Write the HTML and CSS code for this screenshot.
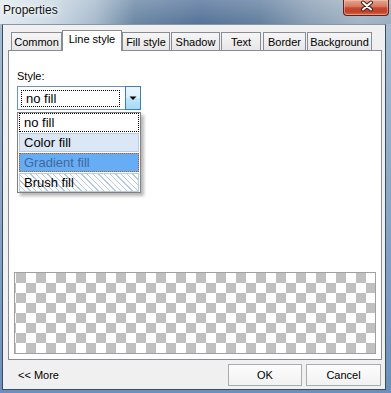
FILE: index.html
```html
<!DOCTYPE html>
<html lang="en">
<head>
    <meta charset="UTF-8">
    <title>Properties</title>
    <link rel="stylesheet" href="styles.css">
</head>
<body>
    <div class="window">
        <div class="titlebar">
            <span class="title">Properties</span>
            <div class="close">
                <svg width="46" height="15" viewBox="0 0 46 15">
                    <path d="M19 2.5 L27 9.5 M27 2.5 L19 9.5" stroke="#4a1d14" stroke-width="4" stroke-linecap="round"/>
                    <path d="M19 2.5 L27 9.5 M27 2.5 L19 9.5" stroke="#fff" stroke-width="2" stroke-linecap="round"/>
                </svg>
            </div>
        </div>

        <div class="client">
            <div class="tabs">
                <div class="tab tab-common">Common</div>
                <div class="tab tab-line active">Line style</div>
                <div class="tab tab-fill">Fill style</div>
                <div class="tab tab-shadow">Shadow</div>
                <div class="tab tab-text">Text</div>
                <div class="tab tab-border">Border</div>
                <div class="tab tab-bg">Background</div>
            </div>

            <div class="panel">
                <div class="field">
                    <div class="label">Style:</div>
                    <div class="combo">
                        <div class="combo-value"><span class="focus">no fill</span></div>
                        <div class="combo-btn">
                            <svg width="14" height="22" viewBox="0 0 14 22">
                                <path d="M3.5 9.5 H10.5 L7 13 Z" fill="#000"/>
                            </svg>
                        </div>
                    </div>
                </div>

                <!-- open list of the combo -->
                <ul class="droplist">
                    <li class="opt opt-focus">no fill</li>
                    <li class="opt opt-color">Color fill</li>
                    <li class="opt opt-selected">Gradient fill</li>
                    <li class="opt opt-brush">Brush fill</li>
                </ul>

                <div class="preview"></div>
            </div>

            <div class="footer">
                <span class="more">&lt;&lt; More</span>
                <button class="btn btn-ok">OK</button>
                <button class="btn btn-cancel">Cancel</button>
            </div>
        </div>
    </div>
</body>
</html>
```

FILE: styles.css
```css
* {
    box-sizing: border-box;
}
body {
    margin: 0;
    font-family: "Liberation Sans", Arial, sans-serif;
    font-size: 11px;
    color: #000;
    background: #6b8fb7;
}
.window {
    width: 391px;
    height: 393px;
    padding: 0 5px 3px 2px;
    display: flex;
    flex-direction: column;
    background:
        linear-gradient(180deg, rgba(255,255,255,0.2), rgba(255,255,255,0) 24px) no-repeat 0 0 / 100% 24px,
        linear-gradient(90deg, #e2eaf0 0, #ccdae5 50px, #a7bbcc 95px, #6a87a4 135px, #55739a 200px, #63809f 260px, #8aa0b5 310px, #a3b5c5 360px, #9aaec0 391px) no-repeat 0 0 / 100% 24px,
        linear-gradient(180deg, #a9bfd2, #6c90b9);
}

/* title bar */
.titlebar {
    height: 24px;
    display: flex;
    align-items: flex-start;
    margin: 0 -5px 0 -2px;
}
.title {
    padding: 3px 0 0 3px;
    font-size: 12px;
    line-height: 14px;
    color: #141414;
    text-shadow: 0 0 5px #fff, 0 0 9px rgba(255,255,255,0.9);
}
.close {
    margin-left: auto;
    margin-right: 2px;
    width: 46px;
    height: 16px;
    border: 1px solid #5e2218;
    border-top: none;
    border-radius: 0 0 4px 4px;
    background: linear-gradient(180deg, #e4a593 0%, #d5765e 45%, #c34a30 52%, #c0412a 78%, #dd6a45 100%);
    box-shadow: inset 0 0 0 1px rgba(255,210,195,0.45);
}
.close svg {
    display: block;
}

/* client area */
.client {
    height: 366px;
    background: #f0f0f0;
    border: 1px solid #3b4d60;
    border-top-color: #8797a7;
    display: flex;
    flex-direction: column;
}

/* tabs */
.tabs {
    display: flex;
    align-items: flex-end;
    height: 20px;
    margin: 5px 0 0 8px;
}
.tab {
    height: 18px;
    padding-top: 1px;
    line-height: 16px;
    text-align: center;
    white-space: nowrap;
    border: 1px solid #898c95;
    border-bottom: none;
    background: linear-gradient(180deg, #f6f6f6, #e6e6e6);
}
.tab.active {
    position: relative;
    z-index: 1;
    height: 21px;
    margin-bottom: -1px;
    padding-top: 0;
    background: #fff;
}
.tab-common { width: 51px; }
.tab-line { width: 60px; }
.tab-fill { width: 48px; }
.tab-shadow { width: 49px; margin-left: 1px; }
.tab-text { width: 40px; margin-left: 1px; }
.tab-border { width: 43px; margin-left: 2px; }
.tab-bg { width: 65px; margin-left: 1px; }

/* tab page */
.panel {
    position: relative;
    height: 310px;
    margin: 0 3px 0 5px;
    background: #fff;
    border: 1px solid #898c95;
    display: flex;
    flex-direction: column;
}
.field {
    padding: 19px 8px 0;
}
.label {
    line-height: 13px;
}
.combo {
    display: flex;
    width: 124px;
    height: 24px;
    margin-top: 3px;
}
.combo-value {
    flex: 1;
    padding: 3px 5px 2px 3px;
    border: 1px solid #7093bb;
    border-right: none;
}
.focus {
    display: block;
    height: 17px;
    padding-left: 4px;
    font-size: 13px;
    line-height: 15px;
    border: 1px dotted #000;
}
.combo-btn {
    width: 16px;
    border: 1px solid #3c7fb1;
    background: linear-gradient(180deg, #eaf6fd 0%, #d9f0fc 50%, #bee6fd 50%, #a7d9f5 100%);
}
.combo-btn svg {
    display: block;
}

/* dropped list */
.droplist {
    position: absolute;
    left: 8px;
    top: 61px;
    width: 124px;
    margin: 0;
    padding: 0 1px;
    list-style: none;
    background: #fff;
    border: 1px solid #828282;
    box-shadow: 3px 3px 3px rgba(0,0,0,0.28);
}
.opt {
    height: 19px;
    margin-bottom: 1px;
    padding-left: 4px;
    font-size: 13px;
    line-height: 17px;
    border: 1px solid transparent;
}
.opt:last-child {
    margin-bottom: 0;
}
.opt-focus {
    border: 1px dotted #000;
}
.opt-color {
    background: #dce7f5;
    border-color: #b7cbe5;
}
.opt-selected {
    background: #67adf5;
    border: 1px dotted #b0601e;
    color: #44679a;
}
.opt-brush {
    border-color: #b7cbe5;
    background: repeating-linear-gradient(45deg, #fff 0, #fff 3px, #b5c9e3 3px, #b5c9e3 4px);
}

/* transparent preview */
.preview {
    height: 82px;
    margin: auto 5px 5px;
    border: 1px solid #a0a0a0;
    background: repeating-conic-gradient(#fff 0 25%, #c0c0c0 0 50%) 1px 0 / 20px 20px;
}

/* bottom buttons */
.footer {
    display: flex;
    align-items: center;
    height: 22px;
    margin: 4px 4px 0 15px;
}
.more {
    margin-right: auto;
}
.btn {
    width: 74px;
    height: 22px;
    padding: 0;
    font: inherit;
    color: #000;
    border: 1px solid #acacac;
    border-radius: 0;
    background: linear-gradient(180deg, #fdfdfd, #f1f1f1);
}
.btn-cancel {
    width: 75px;
    margin-left: 4px;
}
```
